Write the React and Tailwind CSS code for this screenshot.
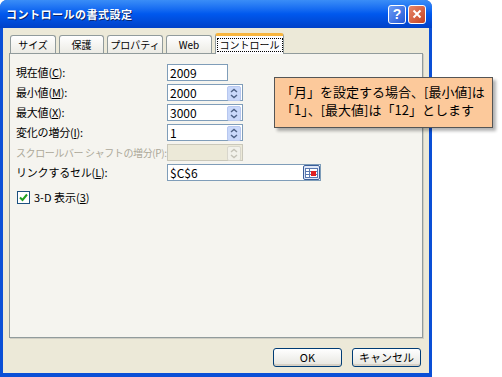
import React from "react";

const jp = { fontFamily: '"Noto Sans CJK JP", "Liberation Sans", sans-serif' };

const Spin = ({ disabled }) => (
  <div
    className={`w-[14px] h-[15px] my-px mr-px rounded-[2px] border flex items-center justify-center ${
      disabled ? "border-[#d8d6cc] bg-[#f2f1ea]" : "border-[#b7c7ef] bg-[#c9d8fa]"
    }`}
  >
    <svg width="8" height="11" viewBox="0 0 8 11">
      <path
        d="M1 4 L4 1.5 L7 4 M1 7 L4 9.5 L7 7"
        fill="none"
        stroke={disabled ? "#c5c3b8" : "#4d6185"}
        strokeWidth="1.4"
      />
    </svg>
  </div>
);

const Field = ({ value, width, spin, disabled, children }) => (
  <div
    className={`h-[17px] border flex items-stretch ${
      disabled ? "border-[#c9c7ba] bg-[#ece9d8]" : "border-[#7f9db9] bg-white"
    }`}
    style={{ width }}
  >
    <div className="flex-1 pl-[2px] text-[12px] leading-[15px] text-black">{value}</div>
    {spin && <Spin disabled={disabled} />}
    {children}
  </div>
);

const Row = ({ label, disabled, children }) => (
  <div className="flex items-center h-[20px]">
    <div
      className={`w-[151px] whitespace-nowrap ${
        disabled ? "text-[10px] tracking-[-0.4px] text-[#aca899]" : "text-[11px] tracking-[-0.2px] text-black"
      }`}
    >
      {label}
    </div>
    {children}
  </div>
);

const Tab = ({ label, active, w }) =>
  active ? (
    <div
      className="h-[21px] -mb-px bg-[#fcfcfe] border border-[#919b9c] border-b-0 border-t-[3px] border-t-[#f8b53d] rounded-t-[3px] flex items-center justify-center relative z-10"
      style={{ width: w }}
    >
      <span className="whitespace-nowrap text-[10px] leading-[12px] px-[2px] border border-dotted border-black">
        {label}
      </span>
    </div>
  ) : (
    <div
      className="h-[18px] mt-[2px] bg-gradient-to-b from-white to-[#ecebe5] border border-[#919b9c] border-b-0 rounded-t-[3px] flex items-center justify-center whitespace-nowrap text-[10px]"
      style={{ width: w }}
    >
      {label}
    </div>
  );

const Button = ({ children }) => (
  <div className="w-[69px] h-[19px] rounded-[3px] border border-[#003c74] bg-gradient-to-b from-white to-[#e6e5df] shadow-[inset_0_-2px_0_#d6d0c5] flex items-center justify-center text-[11px] text-black">
    {children}
  </div>
);

export default function App() {
  return (
    <div className="w-[502px] h-[377px] bg-white flex relative overflow-hidden" style={jp}>
      {/* window */}
      <div className="w-[432px] h-[377px] flex flex-col rounded-t-[7px] overflow-hidden bg-[#0a4fd6]">
        {/* title bar */}
        <div className="h-[28px] bg-gradient-to-b from-[#3a8df7] via-[#0058ee] to-[#0041c8] flex items-center pl-[6px] pr-[6px]">
          <div className="flex-1 text-white font-bold text-[11px] tracking-[0.5px] [text-shadow:1px_1px_0_#0a246a]">
            コントロールの書式設定
          </div>
          <div className="flex gap-[2px]">
            <div
              className="w-[18px] h-[19px] rounded-[3px] border border-white bg-gradient-to-br from-[#6d9cf5] to-[#2456d6] flex items-center justify-center text-white font-bold text-[14px] leading-none"
              style={{ fontFamily: '"Liberation Sans", sans-serif' }}
            >
              ?
            </div>
            <div className="w-[18px] h-[19px] rounded-[3px] border border-white bg-gradient-to-br from-[#e8876a] to-[#c4401e] flex items-center justify-center">
              <svg width="10" height="10" viewBox="0 0 10 10">
                <path d="M1.5 1.5 L8.5 8.5 M8.5 1.5 L1.5 8.5" stroke="white" strokeWidth="2" />
              </svg>
            </div>
          </div>
        </div>
        {/* body */}
        <div className="flex-1 mx-[3px] mb-[4px] bg-[#ece9d8] flex flex-col px-[6px] pt-[5px]">
          <div className="flex items-end gap-[3px] pl-[1px] h-[20px]">
            <Tab label="サイズ" w={46} />
            <Tab label="保護" w={45} />
            <Tab label="プロパティ" w={56} />
            <Tab label="Web" w={46} />
            <Tab label="コントロール" w={69} active />
          </div>
          <div className="h-[285px] border border-[#919b9c] bg-[#f5f4ef] shadow-[1px_1px_0_#d0cec4] pt-[8px] pl-[6px]">
            <Row label={<>現在値(<u>C</u>):</>}>
              <Field value="2009" width={61} />
            </Row>
            <Row label={<>最小値(<u>M</u>):</>}>
              <Field value="2000" width={76} spin />
            </Row>
            <Row label={<>最大値(<u>X</u>):</>}>
              <Field value="3000" width={76} spin />
            </Row>
            <Row label={<>変化の増分(<u>I</u>):</>}>
              <Field value="1" width={76} spin />
            </Row>
            <Row label="スクロールバー シャフトの増分(P):" disabled>
              <Field value="" width={76} spin disabled />
            </Row>
            <div className="flex items-center h-[21px]">
              <div className="w-[151px] whitespace-nowrap text-[11px] tracking-[-0.2px]">
                リンクするセル(<u>L</u>):
              </div>
              <Field value="$C$6" width={154}>
                <div className="w-[17px] h-[15px] border border-[#3a5e9a] rounded-[2px] bg-[#dfe7f7] flex items-center justify-center">
                  <svg width="13" height="10" viewBox="0 0 13 10">
                    <rect x="0.5" y="0.5" width="12" height="9" fill="white" stroke="#5a78b0" />
                    <path d="M0.5 3.5 H12.5 M0.5 6.5 H12.5 M4.5 0.5 V9.5" stroke="#5a78b0" />
                    <rect x="6" y="3" width="5" height="5" fill="#e02020" />
                  </svg>
                </div>
              </Field>
            </div>
            <div className="flex items-center gap-[4px] mt-[6px] pl-[1px]">
              <div className="w-[13px] h-[13px] border border-[#1c5180] bg-white flex items-center justify-center">
                <svg width="9" height="9" viewBox="0 0 9 9">
                  <path d="M1 4.5 L3.5 7 L8 1.5" fill="none" stroke="#21a121" strokeWidth="2" />
                </svg>
              </div>
              <span className="whitespace-nowrap text-[11px]">3-D 表示(<u>3</u>)</span>
            </div>
          </div>
          <div className="flex justify-end gap-[10px] mt-[10px] pr-[2px]">
            <Button>OK</Button>
            <Button>キャンセル</Button>
          </div>
        </div>
      </div>

      {/* callout */}
      <div className="absolute left-[274px] top-[77px] w-[219px] h-[51px] bg-[#fcc99b] border border-[#555] shadow-[3px_3px_3px_rgba(0,0,0,0.3)] pl-[6px] pt-[5px] text-[13px] leading-[18px] text-black whitespace-nowrap">
        <div>「月」を設定する場合、[最小値]は</div>
        <div>「1」、[最大値]は「12」とします</div>
      </div>
    </div>
  );
}
